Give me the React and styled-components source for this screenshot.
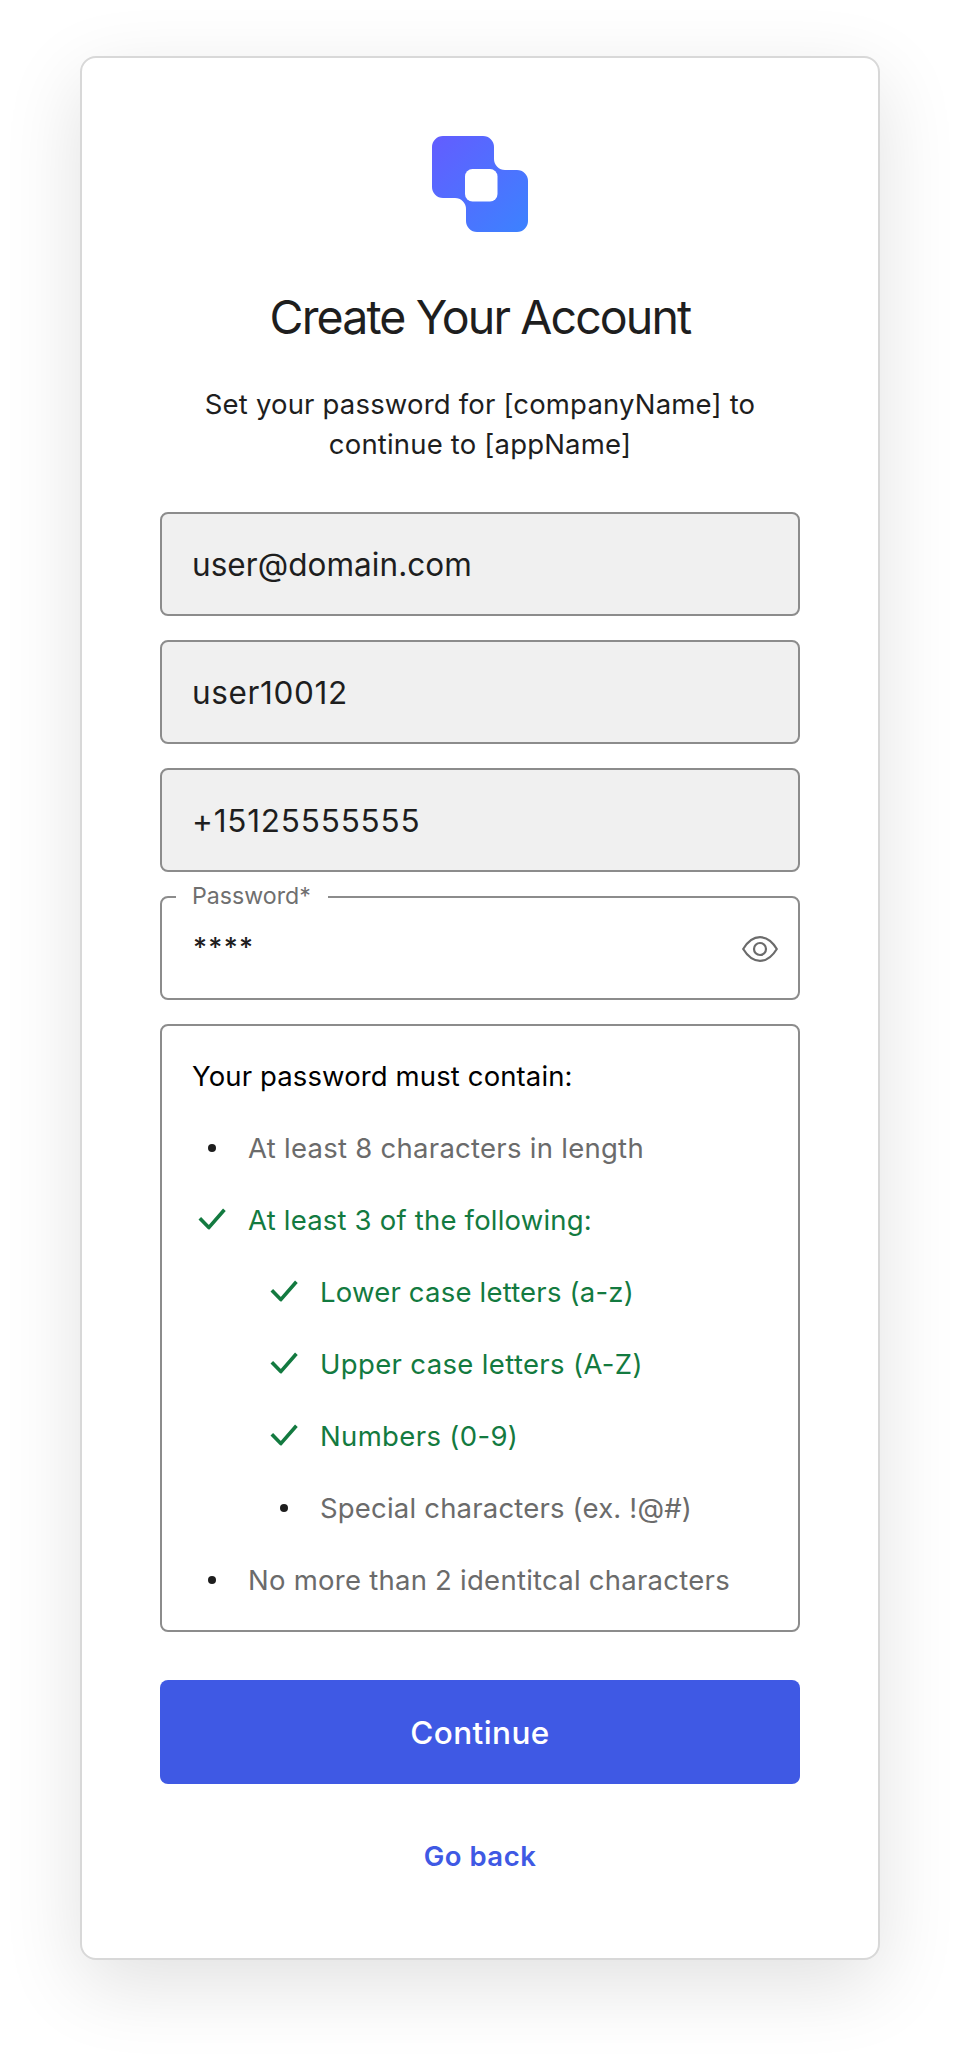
import React from "react";
import styled, { createGlobalStyle } from "styled-components";

const GlobalStyle = createGlobalStyle`
  *, *::before, *::after { box-sizing: border-box; }
  body { margin: 0; background: #fff; }
`;

const Page = styled.main`
  display: flex;
  justify-content: center;
  align-items: flex-start;
  min-height: 2064px;
  padding-top: 56px;
  font-family: Inter, "Liberation Sans", sans-serif;
  color: #1e1e1e;
`;

const Card = styled.section`
  display: flex;
  flex-direction: column;
  width: 800px;
  height: 1904px;
  padding: 78px;
  border: 2px solid #d8d8d8;
  border-radius: 16px;
  background: #fff;
  box-shadow: 0 24px 80px rgba(0, 0, 0, 0.12);
`;

const Logo = styled.svg`
  display: block;
  flex: none;
  width: 96px;
  height: 96px;
  margin: 0 auto;
`;

const Title = styled.h1`
  margin: 55px 0 0;
  font-size: 46.5px;
  font-weight: 400;
  line-height: 60px;
  letter-spacing: -1.88px;
  text-align: center;
`;

const Subtitle = styled.p`
  margin: 37px 0 48px;
  font-size: 27.5px;
  line-height: 40px;
  letter-spacing: 0.18px;
  text-align: center;
`;

const Form = styled.form`
  display: flex;
  flex-direction: column;
  gap: 24px;
`;

const Field = styled.div`
  display: flex;
  align-items: center;
  height: 104px;
  padding: 1px 18px 0 30px;
  border: 2px solid #8c8c8c;
  border-radius: 8px;
  background: #f0f0f0;
  font-size: 31.5px;
  letter-spacing: ${(p) => p.$tracking}px;
`;

const PasswordField = styled(Field)`
  position: relative;
  justify-content: space-between;
  background: #fff;
`;

const FloatingLabel = styled.label`
  position: absolute;
  top: -18px;
  left: 14px;
  padding: 0 17px 0 16px;
  background: #fff;
  color: #6f6f6f;
  font-size: 23.2px;
  line-height: 32px;
  letter-spacing: 0;
`;

const Mask = styled.span`
  padding: 0 0 3px 1px;
  font-size: 27px;
  font-weight: 500;
  letter-spacing: 1.3px;
`;

const EyeIcon = styled.svg`
  width: 40px;
  height: 40px;
`;

const Rules = styled.div`
  display: flex;
  flex-direction: column;
  gap: 32px;
  padding: 30px;
  border: 2px solid #8c8c8c;
  border-radius: 8px;
  font-size: 27.5px;
  line-height: 40px;
`;

const RulesHeading = styled.div`
  color: #000;
  letter-spacing: 0.12px;
`;

const Rule = styled.div`
  display: flex;
  gap: 16px;
  margin-left: ${(p) => (p.$nested ? 72 : 0)}px;
  color: ${(p) => (p.$met ? "#137a40" : "#6b6b6b")};
  letter-spacing: ${(p) => p.$tracking}px;
  white-space: nowrap;
`;

const RuleIcon = styled.svg`
  flex: none;
  width: 40px;
  height: 40px;
`;

const SubmitButton = styled.button`
  height: 104px;
  margin: 24px 0 0;
  padding: 1px 0 0;
  border: 0;
  border-radius: 8px;
  background: #3f59e4;
  color: #fff;
  font: 500 31.5px Inter, "Liberation Sans", sans-serif;
  letter-spacing: 0.4px;
`;

const BackLink = styled.a`
  margin: 52px auto 0;
  color: #3f59e4;
  font-size: 27.5px;
  font-weight: 600;
  line-height: 40px;
  letter-spacing: 0.5px;
`;

const rules = [
  { text: "At least 8 characters in length", tracking: 0.27 },
  { text: "At least 3 of the following:", met: true, tracking: 0.2 },
  { text: "Lower case letters (a-z)", met: true, nested: true, tracking: 0.2 },
  { text: "Upper case letters (A-Z)", met: true, nested: true, tracking: 0.35 },
  { text: "Numbers (0-9)", met: true, nested: true, tracking: 0.35 },
  { text: "Special characters (ex. !@#)", nested: true, tracking: 0.19 },
  { text: "No more than 2 identitcal characters", tracking: 0.25 },
];

export default function App() {
  return (
    <Page>
      <GlobalStyle />
      <Card>
        <Logo viewBox="0 0 96 96">
          <defs>
            <linearGradient id="brand" x1="0" y1="0" x2="1" y2="1">
              <stop offset="0" stopColor="#635dff" />
              <stop offset="1" stopColor="#3c82ff" />
            </linearGradient>
          </defs>
          <path
            fill="url(#brand)"
            d="M11 0H51A11 11 0 0 1 62 11V23A11 11 0 0 0 73 34H85A11 11 0 0 1 96 45V85A11 11 0 0 1 85 96H45A11 11 0 0 1 34 85V73A11 11 0 0 0 23 62H11A11 11 0 0 1 0 51V11A11 11 0 0 1 11 0Z"
          />
          <rect x="33" y="33" width="32.5" height="32.5" rx="7.5" fill="#fff" />
        </Logo>
        <Title>Create Your Account</Title>
        <Subtitle>
          Set your password for [companyName] to
          <br />
          continue to [appName]
        </Subtitle>
        <Form>
          <Field $tracking={0.05}>user@domain.com</Field>
          <Field $tracking={0.64}>user10012</Field>
          <Field $tracking={0.8}>+15125555555</Field>
          <PasswordField $tracking={0}>
            <FloatingLabel>Password*</FloatingLabel>
            <Mask>****</Mask>
            <EyeIcon viewBox="0 0 40 40" fill="none" stroke="#6b6b6b" strokeWidth="2.2">
              <path d="M3.2 20C7.8 12.4 13.6 8.2 20 8.2S32.2 12.4 36.8 20C32.2 27.6 26.4 31.8 20 31.8S7.8 27.6 3.2 20Z" strokeLinejoin="round" />
              <circle cx="20" cy="20" r="6" />
            </EyeIcon>
          </PasswordField>
          <Rules>
            <RulesHeading>Your password must contain:</RulesHeading>
            {rules.map((r) => (
              <Rule key={r.text} $met={r.met} $nested={r.nested} $tracking={r.tracking}>
                <RuleIcon viewBox="0 0 40 40">
                  {r.met ? (
                    <path d="M7.8 18.3L16.8 27.6L32.4 9.8" fill="none" stroke="#137a40" strokeWidth="3.6" strokeLinejoin="round" />
                  ) : (
                    <circle cx="20" cy="20" r="4" fill="#1e1e1e" />
                  )}
                </RuleIcon>
                <span>{r.text}</span>
              </Rule>
            ))}
          </Rules>
          <SubmitButton type="button">Continue</SubmitButton>
        </Form>
        <BackLink>Go back</BackLink>
      </Card>
    </Page>
  );
}
